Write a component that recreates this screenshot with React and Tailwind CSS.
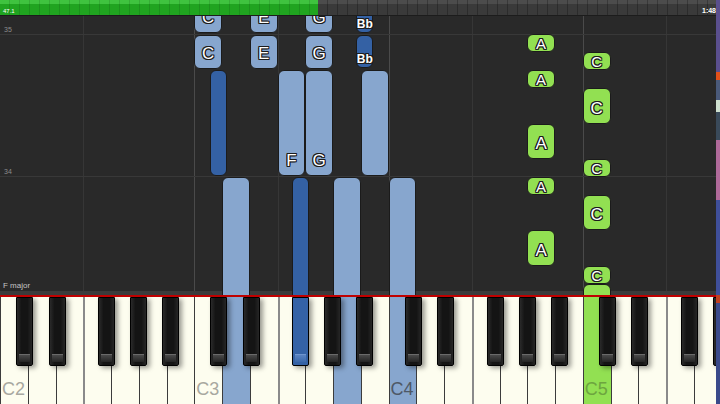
import React from "react";

// keyboard geometry (C2 .. G5, 26 white keys)
const W = 27.75;
const OCT = W * 7;
const BLACK = [
  { name: "C#", off: 16 },
  { name: "D#", off: 48.5 },
  { name: "F#", off: 98 },
  { name: "G#", off: 130 },
  { name: "A#", off: 162 },
];
const BW = 17;
const ROLL_TOP = 16;

const wx = (i) => i * W;
const bx = (oct, k) => oct * OCT + BLACK[k].off;

const noteColors = {
  light: "bg-[#87a6ce]",
  dark: "bg-[#3461a4]",
  green: "bg-[#92e052]",
};

// y values are page coordinates
const notes = [
  // C3 / E3 / G3 stacked chords
  { x: wx(7), w: W, top: -10, bottom: 33, color: "light", label: "C" },
  { x: wx(7), w: W, top: 35, bottom: 69, color: "light", label: "C" },
  { x: wx(9), w: W, top: -10, bottom: 33, color: "light", label: "E" },
  { x: wx(9), w: W, top: 35, bottom: 69, color: "light", label: "E" },
  { x: wx(11), w: W, top: -10, bottom: 33, color: "light", label: "G" },
  { x: wx(11), w: W, top: 35, bottom: 69, color: "light", label: "G" },
  { x: bx(1, 4), w: BW, top: -10, bottom: 33, color: "dark", label: "Bb", small: true },
  { x: bx(1, 4), w: BW, top: 35, bottom: 68, color: "dark", label: "Bb", small: true },
  // middle block
  { x: bx(1, 0), w: BW, top: 70, bottom: 176, color: "dark" },
  { x: wx(10), w: W, top: 70, bottom: 176, color: "light", label: "F" },
  { x: wx(11), w: W, top: 70, bottom: 176, color: "light", label: "G" },
  { x: wx(13), w: W, top: 70, bottom: 176, color: "light" },
  // lower block (still sounding)
  { x: wx(8), w: W, top: 177, bottom: 310, color: "light" },
  { x: bx(1, 2), w: BW, top: 177, bottom: 310, color: "dark" },
  { x: wx(12), w: W, top: 177, bottom: 310, color: "light" },
  { x: wx(14), w: W, top: 177, bottom: 310, color: "light" },
  // right hand A4
  { x: wx(19), w: W, top: 34, bottom: 52, color: "green", label: "A" },
  { x: wx(19), w: W, top: 70, bottom: 88, color: "green", label: "A" },
  { x: wx(19), w: W, top: 124, bottom: 159, color: "green", label: "A" },
  { x: wx(19), w: W, top: 177, bottom: 195, color: "green", label: "A" },
  { x: wx(19), w: W, top: 230, bottom: 266, color: "green", label: "A" },
  // right hand C5
  { x: wx(21), w: W, top: 52, bottom: 70, color: "green", label: "C" },
  { x: wx(21), w: W, top: 88, bottom: 124, color: "green", label: "C" },
  { x: wx(21), w: W, top: 159, bottom: 177, color: "green", label: "C" },
  { x: wx(21), w: W, top: 195, bottom: 230, color: "green", label: "C" },
  { x: wx(21), w: W, top: 266, bottom: 284, color: "green", label: "C" },
  { x: wx(21), w: W, top: 284, bottom: 310, color: "green" },
];

const whiteNames = ["C", "D", "E", "F", "G", "A", "B"];
const whiteKeys = Array.from({ length: 26 }, (_, i) => ({
  i,
  name: whiteNames[i % 7],
  octave: 2 + Math.floor(i / 7),
}));

const pressedWhite = { 8: "light", 12: "light", 14: "light", 21: "green" };

const blackKeys = [];
for (let o = 0; o < 4; o++) {
  BLACK.forEach((b, k) => {
    const x = bx(o, k);
    if (x < 720) blackKeys.push({ x, pressed: o === 1 && k === 2 });
  });
}

const outline =
  "[text-shadow:-1px_-1px_0_#1c1c1c,1px_-1px_0_#1c1c1c,-1px_1px_0_#1c1c1c,1px_1px_0_#1c1c1c,0_1px_0_#1c1c1c,0_-1px_0_#1c1c1c,1px_0_0_#1c1c1c,-1px_0_0_#1c1c1c]";

const Note = ({ x, w, top, bottom, color, label, small }) => {
  const h = bottom - top;
  const short = h < 22;
  let align = "justify-end pb-[6px]";
  if (small) align = "justify-end pb-[2px]";
  else if (short) align = "justify-center";

  return (
    <div
      className={`absolute flex flex-col items-center rounded-[6px] border border-[#1b1b1b] ${noteColors[color]} ${align}`}
      style={{ left: x, width: w, top: top - ROLL_TOP, height: h }}
    >
      {label && (
        <span
          className={`leading-none text-white ${outline} ${
            small ? "text-[12px] font-bold" : short ? "text-[15px]" : "text-[17px]"
          }`}
        >
          {label}
        </span>
      )}
    </div>
  );
};

const TopBar = () => (
  <div className="flex h-[16px] border-b border-[#1c1c1c] text-white">
    <div className="flex w-[318px] items-end bg-[image:repeating-linear-gradient(90deg,transparent_0_9px,rgba(0,0,0,0.12)_9px_10px),linear-gradient(#3fc33f_0_4px,#20a420_4px)] pb-[1px] pl-[3px]">
      <span className="text-[6px] leading-none">47.1</span>
    </div>
    <div className="flex flex-1 items-end justify-end bg-[image:repeating-linear-gradient(90deg,transparent_0_9px,rgba(0,0,0,0.25)_9px_10px),linear-gradient(#4c4c4c_0_4px,#3a3a3a_4px)] pb-[1px] pr-[4px]">
      <span className="text-[7px] font-bold leading-none">1:48</span>
    </div>
  </div>
);

const Roll = () => (
  <div className="relative h-[279px] overflow-hidden bg-[#292929]">
    {/* octave and F grid lines */}
    {[83.25, 277.5, 471.75, 666].map((x) => (
      <div key={x} className="absolute top-0 h-full w-px bg-[#363636]" style={{ left: x }} />
    ))}
    {[OCT, OCT * 2, OCT * 3].map((x) => (
      <div key={x} className="absolute top-0 h-full w-px bg-[#4a4a4a]" style={{ left: x }} />
    ))}
    <div className="absolute left-0 top-[18px] h-px w-full bg-[#383838]" />
    <div className="absolute left-0 top-[160px] h-px w-full bg-[#383838]" />
    <span className="absolute left-[4px] top-[10px] text-[7px] leading-none text-[#8c8c8c]">35</span>
    <span className="absolute left-[4px] top-[152px] text-[7px] leading-none text-[#8c8c8c]">34</span>
    <span className="absolute left-[3px] top-[266px] text-[8px] leading-none text-[#c4c4c4]">F major</span>
    <div className="absolute bottom-0 left-0 h-[4px] w-full bg-[#3b3b3b]" />

    {notes.map((n, idx) => (
      <Note key={idx} {...n} />
    ))}
  </div>
);

const whiteBg = {
  light: "bg-[#87a6ce]",
  green: "bg-[#92e052]",
};

const labelColor = {
  none: "text-[#a8a8a0]",
  light: "text-[#4e5866]",
  green: "text-[#6da53f]",
};

const Keyboard = () => (
  <div className="relative h-[107px] overflow-hidden">
    <div className="flex h-full w-[740px]">
      {whiteKeys.map((k) => {
        const pressed = pressedWhite[k.i];
        const border = k.name === "F" ? "border-l-2 border-[#8a8a8a]" : "border-l border-[#3c3c3c]";
        return (
          <div
            key={k.i}
            className={`flex h-full w-[27.75px] shrink-0 flex-col justify-end pb-[6px] pl-[1px] ${border} ${
              pressed ? whiteBg[pressed] : "bg-[#fdfdef]"
            }`}
          >
            {k.name === "C" && (
              <span className={`text-[18px] leading-none ${labelColor[pressed || "none"]}`}>
                C{k.octave}
              </span>
            )}
          </div>
        );
      })}
    </div>

    {blackKeys.map((b) => (
      <div
        key={b.x}
        className={`absolute top-0 h-[69px] rounded-b-[2px] border border-black shadow-[3px_2px_5px_rgba(0,0,0,0.4)] ${
          b.pressed ? "bg-[#3462a6]" : "bg-[linear-gradient(90deg,#2a2a2a,#141414_30%,#141414_70%,#262626)]"
        }`}
        style={{ left: b.x, width: BW }}
      >
        <div
          className={`absolute bottom-[3px] left-[2px] right-[2px] h-[8px] border-t ${
            b.pressed
              ? "border-[#6e95cf] bg-[linear-gradient(#5983c2,#3a68ab)]"
              : "border-[#6a6a6a] bg-[linear-gradient(#4a4a4a,#242424)]"
          }`}
        />
      </div>
    ))}
  </div>
);

export default function App() {
  return (
    <div className="relative h-[404px] w-[720px] overflow-hidden bg-[#292929] font-['Liberation_Sans',Arial,sans-serif]">
      <TopBar />
      <Roll />
      <div className="h-[2px] bg-[#c00000]" />
      <Keyboard />

      {/* edge of the neighbouring window */}
      <div className="absolute right-0 top-0 h-full w-[4px] bg-[linear-gradient(#5a4f8e_0_72px,#e0501a_72px_80px,#4a5a7a_80px_100px,#cfe0d0_100px_112px,#3a4a5a_112px_140px,#b06a9a_140px_200px,#3f4f9a_200px_295px,#c04020_295px_303px,#3a4a8a_303px)]" />
    </div>
  );
}
